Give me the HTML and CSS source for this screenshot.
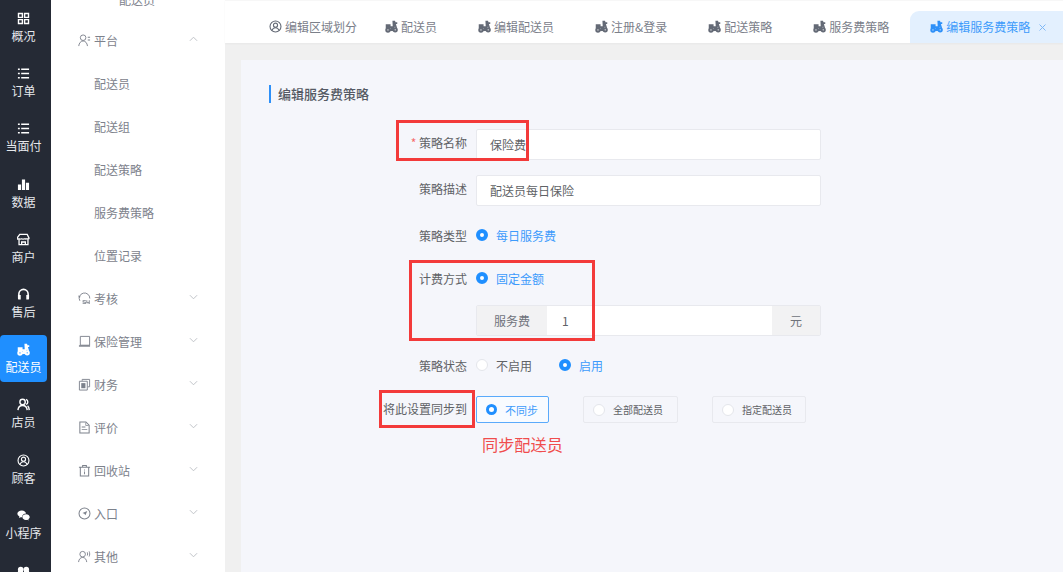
FILE: index.html
```html
<!DOCTYPE html>
<html lang="zh-CN">
<head>
<meta charset="utf-8">
<title>编辑服务费策略</title>
<link rel="stylesheet" href="styles.css">
</head>
<body>
<svg class="defs" width="0" height="0" aria-hidden="true">
  <symbol id="i-rider" viewBox="0 0 14 14"><path fill="currentColor" d="M.8 4.500h5.200v4H.8zM8 .8h2.800l.5 1.500h1.900v2h-1.500l1.300 4-1.600.6-.6-1.900-1.500 2.600H5.800V6.800H8.300z"/><path fill="currentColor" fill-rule="evenodd" d="M3.200 7.800a2.900 2.900 0 1 1 0 5.800 2.900 2.900 0 0 1 0-5.800zm0 2.200a.7.7 0 1 0 0 1.400.7.7 0 0 0 0-1.400zM11 7.800a2.800 2.800 0 1 1 0 5.600 2.800 2.800 0 0 1 0-5.600zm0 2.100a.7.7 0 1 0 0 1.400.7.7 0 0 0 0-1.400z"/><path fill="currentColor" d="M5 9.500h4.500v2.400H5z"/></symbol>
  <symbol id="i-face" viewBox="0 0 14 14"><g fill="none" stroke="currentColor" stroke-width="1.200"><circle cx="7" cy="7" r="5.900"/><circle cx="7" cy="5.600" r="2.200"/><path d="M3.200 11.200c.8-2 2.200-2.900 3.800-2.900s3 .9 3.800 2.900"/></g></symbol>
  <symbol id="i-grid" viewBox="0 0 14 14"><g fill="none" stroke="currentColor" stroke-width="1.500"><path d="M1.600 1.600h4.200v4.200H1.600zM8.200 1.600h4.200v4.200H8.200zM1.600 8.200h4.200v4.200H1.600zM8.200 8.200h4.200v4.200H8.200z"/></g></symbol>
  <symbol id="i-list" viewBox="0 0 14 14"><path fill="currentColor" d="M1 1.500h2v1.700H1zM4.500 1.500H13v1.700H4.500zM1 6.200h2v1.700H1zM4.500 6.200H13v1.700H4.500zM1 10.800h2v1.700H1zM4.500 10.800H13v1.700H4.500z"/></symbol>
  <symbol id="i-bars" viewBox="0 0 14 14"><path fill="currentColor" d="M1 7h3.400v6H1zM5.300 1.500h3.400V13H5.300zM9.600 5h3.400v8H9.600z"/></symbol>
  <symbol id="i-shop" viewBox="0 0 14 14"><g fill="none" stroke="currentColor" stroke-width="1.400"><path d="M3 1.500h8l2 4c0 1.400-2 1.400-2 .2 0 1.200-3 1.200-3 0-.2 1.200-2.800 1.200-3 0 0 1.200-3.200 1.200-3 0 0 1.200-2 1.200-2-.2z"/><path d="M2.200 7v5.500h9.600V7"/><path d="M5 12.500V9.700h4v2.800"/></g></symbol>
  <symbol id="i-head" viewBox="0 0 14 14"><path fill="none" stroke="currentColor" stroke-width="1.700" d="M2 9V6.500a5 5 0 0 1 10 0V9"/><path fill="currentColor" d="M1 7.500h3v5H2.300A1.300 1.300 0 0 1 1 11.200zM10 7.500h3v3.700a1.300 1.300 0 0 1-1.300 1.300H10z"/></symbol>
  <symbol id="i-staff" viewBox="0 0 14 14"><g fill="none" stroke="currentColor" stroke-width="1.500"><circle cx="6" cy="4.200" r="2.900"/><path d="M1 13c.3-3 2.200-5 5-5s4.700 2 5 5"/><path d="M9.800 1.500a2.900 2.900 0 0 1 0 5.400M11.400 8.300c1 .8 1.600 2.400 1.800 4.700"/></g></symbol>
  <symbol id="i-chat" viewBox="0 0 14 14"><path fill="currentColor" d="M5.200 1.500c2.500 0 4.400 1.500 4.600 3.400-2.400 0-4.500 1.500-4.300 4-.5.1-1 0-1.500-.1L2.200 9.800l.4-1.700C1.200 7.300.4 6.100.4 4.900.4 3 2.500 1.500 5.200 1.500z"/><path fill="currentColor" d="M9.800 5.700c2.100 0 3.900 1.300 3.900 3 0 1-.6 1.800-1.500 2.400l.3 1.300-1.400-.8c-2.800.8-5.300-.6-5.300-2.900 0-1.700 1.800-3 4-3z"/></symbol>
  <symbol id="i-gift" viewBox="0 0 14 14"><circle cx="4" cy="6" r="3" fill="currentColor"/><circle cx="10" cy="6" r="3" fill="currentColor"/><path fill="currentColor" d="M1 7h5.500v6H1zM7.500 7H13v6H7.500z"/></symbol>
  <symbol id="i-user-more" viewBox="0 0 14 14"><g fill="none" stroke="currentColor" stroke-width="1"><circle cx="5.500" cy="4" r="3"/><path d="M.8 13c.3-3.200 2.200-5.500 4.700-5.500s4.400 2.300 4.700 5.500"/></g><path fill="currentColor" d="M10.500 3h2.500v1.100h-2.500zM10.500 6h2.500v1.100h-2.500z"/></symbol>
  <symbol id="i-24" viewBox="0 0 14 14"><path fill="none" stroke="currentColor" stroke-width="1" d="M2 9.500A5.700 5.700 0 1 1 12.700 7"/><path fill="currentColor" d="M.7 3.500 3 5.500.5 6z"/><path fill="currentColor" d="M5 9h3.400v1H6v.8h2.400V13H5v-1h2.400v-.8H5zM9 9h1v2h1.600V9h1v4h-1v-1H9z"/></symbol>
  <symbol id="i-laptop" viewBox="0 0 14 14"><path fill="none" stroke="currentColor" stroke-width="1" d="M2.500 1.500h10v9.500h-10z"/><path fill="currentColor" d="M1 11h12v1.600H1z"/></symbol>
  <symbol id="i-money" viewBox="0 0 14 14"><path fill="none" stroke="currentColor" stroke-width="1" d="M4.500 3V1.500h8v8H10.500M1.500 3.500h8.500v9.500H1.500z"/><path fill="currentColor" d="M3.500 5.500h4.500v5.500H3.500z"/></symbol>
  <symbol id="i-doc" viewBox="0 0 14 14"><path fill="none" stroke="currentColor" stroke-width="1.100" d="M2 1h6.500L12 4.500V13H2z"/><path fill="currentColor" d="M4 6h4v1H4zM4 8.500h6v1H4zM8 1.500V5h3.500v-.8H8.800V1.500z"/></symbol>
  <symbol id="i-trash" viewBox="0 0 14 14"><path fill="none" stroke="currentColor" stroke-width="1.100" d="M2.500 3.500h9V13h-9zM1 3.500h12M5 3.500v-2h4v2"/><path fill="currentColor" d="M6.500 6h1v1h-1zM6.500 8h1v3h-1z"/></symbol>
  <symbol id="i-nav" viewBox="0 0 14 14"><circle cx="7" cy="7" r="5.900" fill="none" stroke="currentColor" stroke-width="1.100"/><path fill="currentColor" d="M10 4.200 8 9 6.800 7.300 4.800 6.500z"/></symbol>
  <symbol id="i-user-sound" viewBox="0 0 14 14"><g fill="none" stroke="currentColor" stroke-width="1"><circle cx="5" cy="4.500" r="3"/><path d="M.6 13c.3-3 2-5 4.400-5s4.100 2 4.400 5M10 2.500c.5 1 .5 2.500 0 3.500M12 1.500c.8 1.500.8 4 0 5.500"/></g></symbol>
</svg>
<div class="app">
  <nav class="rail">
    <a class="rail-item"><svg class="rail-icon"><use href="#i-grid"/></svg><span>概况</span></a>
    <a class="rail-item"><svg class="rail-icon"><use href="#i-list"/></svg><span>订单</span></a>
    <a class="rail-item"><svg class="rail-icon"><use href="#i-list"/></svg><span>当面付</span></a>
    <a class="rail-item"><svg class="rail-icon"><use href="#i-bars"/></svg><span>数据</span></a>
    <a class="rail-item"><svg class="rail-icon"><use href="#i-shop"/></svg><span>商户</span></a>
    <a class="rail-item"><svg class="rail-icon"><use href="#i-head"/></svg><span>售后</span></a>
    <a class="rail-item is-active"><svg class="rail-icon"><use href="#i-rider"/></svg><span>配送员</span></a>
    <a class="rail-item"><svg class="rail-icon"><use href="#i-staff"/></svg><span>店员</span></a>
    <a class="rail-item"><svg class="rail-icon"><use href="#i-face"/></svg><span>顾客</span></a>
    <a class="rail-item"><svg class="rail-icon"><use href="#i-chat"/></svg><span>小程序</span></a>
    <a class="rail-item"><svg class="rail-icon"><use href="#i-gift"/></svg></a>
  </nav>
  <aside class="side">
    <div class="side-top">配送员</div>
    <div class="menu-row"><svg class="menu-icon"><use href="#i-user-more"/></svg><span class="menu-label">平台</span><svg class="chev" viewBox="0 0 10 6"><path d="M1 5l4-4 4 4"/></svg></div>
    <div class="menu-sub">配送员</div>
    <div class="menu-sub">配送组</div>
    <div class="menu-sub">配送策略</div>
    <div class="menu-sub">服务费策略</div>
    <div class="menu-sub">位置记录</div>
    <div class="menu-row"><svg class="menu-icon"><use href="#i-24"/></svg><span class="menu-label">考核</span><svg class="chev" viewBox="0 0 10 6"><path d="M1 1l4 4 4-4"/></svg></div>
    <div class="menu-row"><svg class="menu-icon"><use href="#i-laptop"/></svg><span class="menu-label">保险管理</span><svg class="chev" viewBox="0 0 10 6"><path d="M1 1l4 4 4-4"/></svg></div>
    <div class="menu-row"><svg class="menu-icon"><use href="#i-money"/></svg><span class="menu-label">财务</span><svg class="chev" viewBox="0 0 10 6"><path d="M1 1l4 4 4-4"/></svg></div>
    <div class="menu-row"><svg class="menu-icon"><use href="#i-doc"/></svg><span class="menu-label">评价</span><svg class="chev" viewBox="0 0 10 6"><path d="M1 1l4 4 4-4"/></svg></div>
    <div class="menu-row"><svg class="menu-icon"><use href="#i-trash"/></svg><span class="menu-label">回收站</span><svg class="chev" viewBox="0 0 10 6"><path d="M1 1l4 4 4-4"/></svg></div>
    <div class="menu-row"><svg class="menu-icon"><use href="#i-nav"/></svg><span class="menu-label">入口</span><svg class="chev" viewBox="0 0 10 6"><path d="M1 1l4 4 4-4"/></svg></div>
    <div class="menu-row"><svg class="menu-icon"><use href="#i-user-sound"/></svg><span class="menu-label">其他</span><svg class="chev" viewBox="0 0 10 6"><path d="M1 1l4 4 4-4"/></svg></div>
  </aside>
  <main class="main">
    <div class="tabs">
      <div class="tab tab-first"><svg class="tab-icon"><use href="#i-face"/></svg>编辑区域划分</div>
      <div class="tab"><svg class="tab-icon"><use href="#i-rider"/></svg>配送员</div>
      <div class="tab"><svg class="tab-icon"><use href="#i-rider"/></svg>编辑配送员</div>
      <div class="tab"><svg class="tab-icon"><use href="#i-rider"/></svg>注册&amp;登录</div>
      <div class="tab"><svg class="tab-icon"><use href="#i-rider"/></svg>配送策略</div>
      <div class="tab tab-before-active"><svg class="tab-icon"><use href="#i-rider"/></svg>服务费策略</div>
      <div class="tab tab-active"><svg class="tab-icon"><use href="#i-rider"/></svg>编辑服务费策略<svg class="tab-close" viewBox="0 0 7 7"><path d="M.5.5l6 6M6.500.5l-6 6"/></svg></div>
    </div>
    <section class="panel">
      <h2 class="title">编辑服务费策略</h2>
      <div class="row row-name">
        <label class="label"><span class="req">*</span> 策略名称</label>
        <div class="input">保险费</div>
      </div>
      <div class="row row-desc">
        <label class="label">策略描述</label>
        <div class="input">配送员每日保险</div>
      </div>
      <div class="row row-type">
        <label class="label">策略类型</label>
        <div class="radio on"><i class="dot"></i>每日服务费</div>
      </div>
      <div class="row row-bill">
        <label class="label">计费方式</label>
        <div class="radio on"><i class="dot"></i>固定金额</div>
      </div>
      <div class="row row-group">
        <label class="label"></label>
        <div class="group">
          <span class="addon addon-left">服务费</span>
          <span class="group-value">1</span>
          <span class="addon addon-right">元</span>
        </div>
      </div>
      <div class="row row-status">
        <label class="label">策略状态</label>
        <div class="radio radio-off"><i class="dot"></i>不启用</div>
        <div class="radio on"><i class="dot"></i>启用</div>
      </div>
      <div class="row row-sync">
        <label class="label">将此设置同步到</label>
        <div class="radio-btn on"><i class="dot"></i>不同步</div>
        <div class="radio-btn btn-all"><i class="dot"></i>全部配送员</div>
        <div class="radio-btn btn-some"><i class="dot"></i>指定配送员</div>
      </div>
      <p class="note">同步配送员</p>
    </section>
    <div class="mark mark-name"></div>
    <div class="mark mark-bill"></div>
    <div class="mark mark-sync"></div>
  </main>
</div>
</body>
</html>
```
FILE: styles.css
```css
* { box-sizing: border-box; }
html, body { margin: 0; height: 100%; overflow: hidden; }
body { font-family: "Noto Sans CJK SC", "Noto Sans", sans-serif; font-size: 12px; color: #606266; background: #f0f0f0; }
.defs { position: absolute; }
.app { display: flex; height: 572px; overflow: hidden; }

.rail { width: 51px; flex: none; background: #252a35; padding-top: 4px; }
.rail-item { display: flex; flex-direction: column; align-items: center; width: 47px; height: 47px; margin-bottom: 8.2px; padding-top: 8px; border-radius: 4px; color: #fff; }
.rail-item span { font-size: 12px; line-height: 17px; margin-top: 2px; white-space: nowrap; color: #e6e8ec; }
.rail-icon { width: 13px; height: 13px; flex: none; color: #fff; }
.rail-item.is-active { background: #1f8fff; }
.rail-item.is-active span { color: #fff; }

.side { width: 174px; flex: none; background: #fff; color: #7d828c; }
.side-top { height: 28px; margin-top: -9px; padding-left: 68px; line-height: 18px; }
.menu-row { display: flex; align-items: center; height: 43px; padding: 0 27px; }
.menu-icon { width: 13px; height: 13px; color: #7d828c; flex: none; }
.menu-label { margin-left: 3px; flex: 1; }
.chev { width: 9px; height: 6px; fill: none; stroke: #b9bcc2; stroke-width: 1; flex: none; margin-top: -3px; }
.menu-sub { height: 43px; line-height: 43px; padding-left: 43px; }

.main { position: relative; flex: 1; min-width: 0; }
.tabs { display: flex; align-items: flex-end; height: 43px; padding-left: 44px; background: #fff; border-top: 1px solid #f7f7f7; box-shadow: 0 1px 2px rgba(0,0,0,.04); color: #7b808a; }
.tab { display: flex; align-items: center; height: 32px; padding: 0 41px 2px 0; white-space: nowrap; }
.tab-first { padding-right: 28px; }
.tab-before-active { padding-right: 21px; }
.tab-icon { width: 13px; height: 13px; margin-right: 3px; color: #646a76; flex: none; }
.tab-active { flex: 1; padding: 0 0 2px 20px; background: #e3f0fe; color: #3d9bfb; border-radius: 9px 0 0 0; }
.tab-active .tab-icon { color: #2e90f8; }
.tab-close { width: 7px; height: 7px; margin-left: 9px; margin-top: 2px; fill: none; stroke: #7fb8f6; stroke-width: 1; }

.panel { margin: 17px 0 0 16px; height: 530px; padding: 25px 0 0 28px; background: #f5f6fb; }
.title { margin: 0 0 26px; padding-left: 7px; height: 18px; border-left: 2px solid #2e90f8; font-size: 13px; line-height: 18px; font-weight: 500; color: #555a64; }

.row { display: flex; align-items: center; }
.label { width: 198px; flex: none; margin-right: 9px; text-align: right; white-space: nowrap; color: #606266; }
.req { color: #f56c6c; }
.row-name { height: 31px; margin-bottom: 15px; }
.row-desc { height: 31px; margin-bottom: 14px; }
.row-type { height: 30px; margin-bottom: 13px; }
.row-bill { height: 30px; margin-bottom: 12px; }
.row-group { height: 31px; margin-bottom: 14px; }
.row-status { height: 30px; margin-bottom: 16px; }
.row-sync { height: 27px; }
.row-name .label, .row-desc .label { padding-bottom: 4px; }
.row-sync .label { padding-bottom: 2px; }

.input { width: 345px; height: 31px; padding: 0 13px; line-height: 29px; background: #fff; border: 1px solid #e8e9ee; border-radius: 2px; color: #606266; }

.radio { display: flex; align-items: center; margin-right: 27px; }
.radio .dot, .radio-btn .dot { display: block; flex: none; width: 12px; height: 12px; margin-right: 8px; border-radius: 50%; background: #fff; border: 1px solid #e4e6eb; }
.radio.on, .radio-btn.on { color: #3d9bfb; }
.radio.on .dot, .radio-btn.on .dot { background: #fff; border: 4px solid #1f8fff; }

.group { display: flex; width: 345px; height: 31px; background: #fff; border: 1px solid #e8e9ee; border-radius: 2px; }
.addon { display: flex; align-items: center; justify-content: center; background: #f2f2f3; color: #6f737b; }
.addon-left { width: 70px; }
.addon-right { width: 48px; }
.group-value { flex: 1; padding-left: 15px; line-height: 29px; }

.radio-btn { display: flex; align-items: center; flex: none; height: 27px; padding: 0 9px; margin-right: 34px; background: #f5f6fb; border: 1px solid #e8e9ee; border-radius: 2px; font-size: 10px; white-space: nowrap; color: #606266; }
.radio-btn.on { width: 73px; background: #f8fbff; border-color: #5aaafb; font-size: 11px; }
.radio-btn.on .dot { width: 11px; height: 11px; border-width: 3.5px; }
.btn-all { width: 95px; }
.btn-some { width: 94px; }

.note { margin: 10px 0 0 213px; font-size: 16.2px; line-height: 22px; color: #f04d4d; white-space: nowrap; }

.mark { position: absolute; border: 3px solid #f33a3a; }
.mark-name { left: 171px; top: 120px; width: 133px; height: 41px; }
.mark-bill { left: 184px; top: 260px; width: 186px; height: 81px; }
.mark-sync { left: 154px; top: 390px; width: 96px; height: 38px; }
```
